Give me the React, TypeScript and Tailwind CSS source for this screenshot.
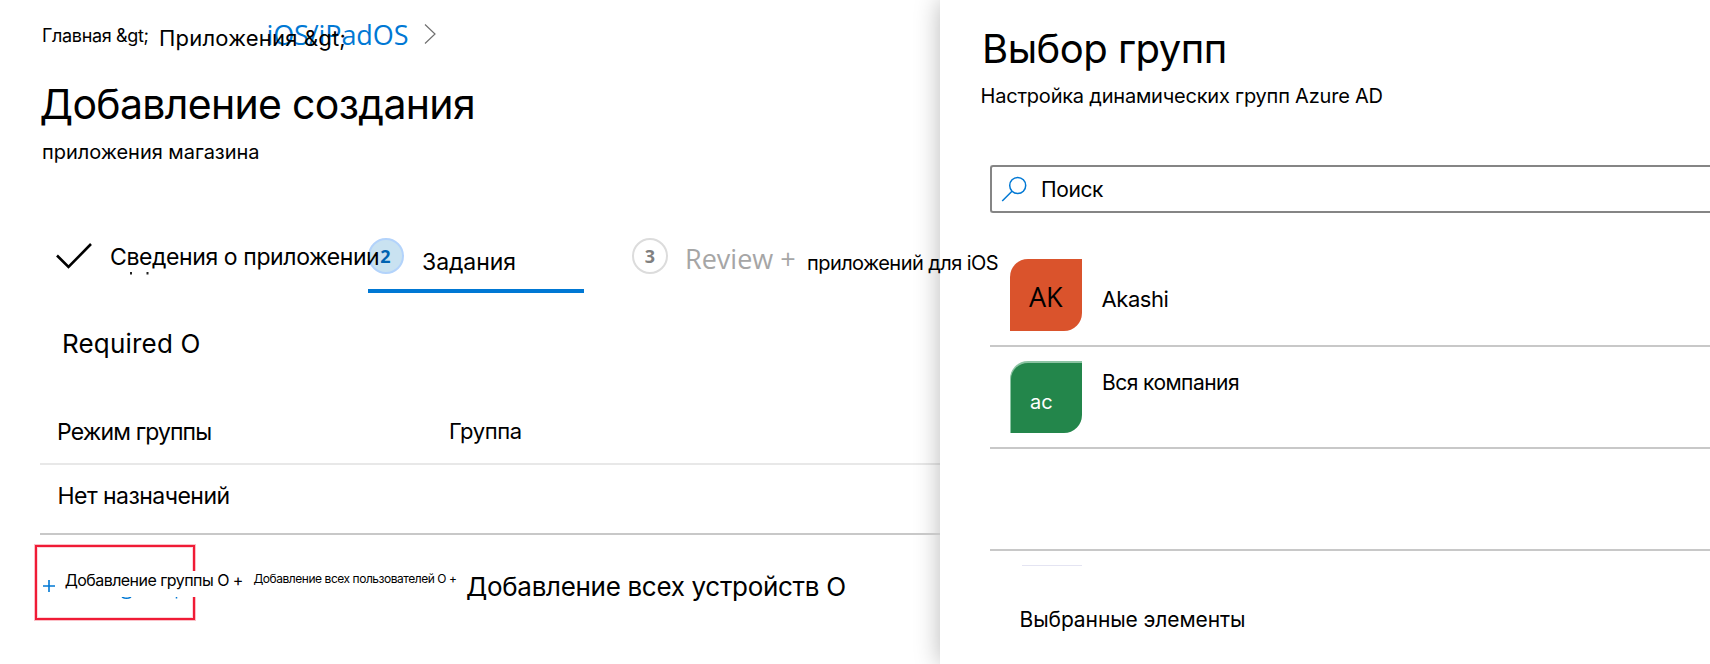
import type { ReactNode } from "react";

function Text({ className, children }: { className: string; children: ReactNode }) {
  return <span className={`block shrink-0 whitespace-nowrap ${className}`}>{children}</span>;
}

function Breadcrumb() {
  return (
    <nav className="flex h-[74px] items-start pl-[42px]">
      <Text className="mt-[15.6px] w-[117px] text-[18px] leading-[40px] tracking-[-0.019em]">Главная &amp;gt;</Text>
      <Text className="relative z-10 mt-[18px] w-[107.5px] text-[22px] leading-[40px] tracking-[0.009em]">Приложения &amp;gt;</Text>
      <Text className="mt-[15px] w-[157.5px] font-['Open_Sans',sans-serif] text-[27px] leading-[40px] tracking-[-0.004em] text-[#0078d4]">iOS/iPadOS</Text>
      <svg className="mt-[23px] h-[22px] w-[13px]" viewBox="0 0 13 22" fill="none" stroke="#707070" strokeWidth="1.2">
        <path d="M1 1.5L11 11L1 20.5" />
      </svg>
    </nav>
  );
}

function Steps() {
  return (
    <div className="flex h-[87px] items-start pl-[55px]">
      <div className="relative h-[60px] w-[55px] shrink-0">
        <svg className="mt-[4px] h-[32px] w-[54px]" viewBox="0 0 54 32" fill="none" stroke="#000" strokeWidth="2.6">
          <path d="M2 18.5L13.5 30L36 7" />
        </svg>
        <svg className="absolute top-[39px] left-[74px] h-[3px] w-[22px]" viewBox="0 0 22 3" fill="#222">
          <rect x="1" y="0" width="2" height="2.5" />
          <rect x="17.5" y="0" width="2" height="2.5" />
        </svg>
      </div>
      <Text className="relative z-10 mt-[3.6px] w-[258px] text-[23px] leading-[40px] tracking-[-0.0175em]">Сведения о приложении</Text>
      <div className="flex h-[60px] w-[216px] shrink-0 items-start border-b-4 border-[#0078d4]">
        <span className="mt-[5px] flex size-[36px] items-center justify-center rounded-full border-2 border-[#b3d3fb] bg-[#c9e2f1] pr-px font-['Open_Sans',sans-serif] text-[18px] leading-none font-bold text-[#0063b1]">2</span>
        <Text className="mt-[9.2px] ml-[18px] text-[23px] leading-[40px] tracking-[-0.003em]">Задания</Text>
      </div>
      <span className="mt-[5px] ml-[48px] flex size-[36px] shrink-0 items-center justify-center rounded-full border-2 border-[#dcdcdc] font-['Open_Sans',sans-serif] text-[18px] leading-none font-bold text-[#808080]">3</span>
      <Text className="mt-[6px] ml-[17px] w-[122px] font-['Open_Sans',sans-serif] text-[27px] leading-[40px] text-[#a6a6a6]">Review +</Text>
      <Text className="mt-[9.7px] text-[20px] leading-[40px] tracking-[-0.028em]">приложений для iOS</Text>
    </div>
  );
}

function Assignments() {
  return (
    <section>
      <Text className="mt-[3.5px] h-[76.5px] pl-[62px] text-[26px] leading-[40px] tracking-[0.007em]">Required O</Text>
      <div className="ml-[40px]">
        <div className="flex h-[65px] items-start border-b-2 border-black/9 pt-[11.6px] pl-[17px]">
          <Text className="w-[392px] text-[23px] leading-[40px] tracking-[-0.038em]">Режим группы</Text>
          <Text className="-mt-px text-[22px] leading-[40px] tracking-[-0.018em]">Группа</Text>
        </div>
        <div className="h-[70px] border-b-2 border-[#c8c8c8] pt-[10.6px] pl-[17.5px]">
          <Text className="text-[23px] leading-[40px] tracking-[-0.0235em]">Нет назначений</Text>
        </div>
      </div>
    </section>
  );
}

function Actions() {
  return (
    <div className="flex h-[129px] items-start pl-[35px]">
      <div className="relative mt-[10px] flex h-[75px] w-[160px] shrink-0 items-start border-2 border-[#f01b36] shadow-[0_0_0_1px_rgba(240,27,54,0.28),inset_0_0_0_1px_rgba(240,27,54,0.18)]">
        <svg className="mt-[32px] ml-[5px] h-[14px] w-[14px] shrink-0" viewBox="0 0 14 14" stroke="#0078d4" strokeWidth="1.6">
          <path d="M1 7H13M7 1V13" />
        </svg>
        <span className="absolute top-[24px] -right-[4px] h-[26px] w-[8px] bg-white" />
        <Text className="relative mt-[13.2px] ml-[8.7px] text-[16px] leading-[40px] tracking-[-0.034em]">Добавление группы O +</Text>
        <svg className="absolute top-[50px] left-[83px] h-[4px] w-[60px]" viewBox="0 0 60 4" fill="none" stroke="#0078d4" strokeWidth="1.5">
          <path d="M2 0Q6.5 2.6 11 0M56.5 0V1.5" />
        </svg>
      </div>
      <Text className="mt-[23.6px] ml-[58.5px] w-[212.5px] text-[12px] leading-[40px] tracking-[-0.0383em]">Добавление всех пользователей O +</Text>
      <Text className="mt-[31.5px] text-[26px] leading-[40px] tracking-[-0.012em]">Добавление всех устройств O</Text>
    </div>
  );
}

function GroupPanel() {
  return (
    <aside className="flex h-full min-w-0 flex-1 flex-col bg-white shadow-[0_0_24px_rgba(0,0,0,0.28)]">
      <Text className="mt-[18.5px] h-[57.2px] pl-[42px] text-[40px] leading-[60px] tracking-[-0.0128em]">Выбор групп</Text>
      <Text className="h-[89.3px] pl-[40.5px] text-[20px] leading-[40px] tracking-[-0.0105em]">Настройка динамических групп Azure AD</Text>
      <div className="ml-[50px] flex h-[48px] shrink-0 items-start rounded-l-[3px] border-2 border-r-0 border-[#858585]">
        <svg className="mt-[9px] ml-[9px] h-[28px] w-[28px]" viewBox="0 0 28 28" fill="none" stroke="#0078d4" strokeWidth="1.5">
          <circle cx="16.7" cy="9.5" r="8" />
          <path d="M11 15.2L1.2 25" />
        </svg>
        <Text className="mt-[3.4px] ml-[12px] text-[21px] leading-[40px] tracking-[-0.019em]">Поиск</Text>
      </div>
      <ul className="ml-[50px]">
        <li className="flex h-[134px] items-start border-b-2 border-[#c8c8c8] pt-[46px] pl-[20px]">
          <span className="h-[72px] w-[72px] rounded-tl-[18px] rounded-br-[18px] bg-[#da532c] pt-[18.5px] pl-[19px] font-['Open_Sans',sans-serif] text-[27px] leading-[40px]">AK</span>
          <Text className="mt-[20px] ml-[19.5px] text-[22px] leading-[40px] tracking-[-0.0194em]">Akashi</Text>
        </li>
        <li className="flex h-[102px] items-start border-b-2 border-[#c8c8c8] pt-[14px] pl-[20px]">
          <span className="h-[72px] w-[72px] rounded-tl-[18px] rounded-br-[18px] border-t-2 border-l border-[#8cc4a3] bg-[#23864b] pt-[18.7px] pl-[19px] text-[20px] leading-[40px] text-white">ac</span>
          <Text className="mt-[2.4px] ml-[20px] text-[21px] leading-[40px] tracking-[-0.0261em]">Вся компания</Text>
        </li>
        <li className="h-[102px] border-b-2 border-[#c8c8c8]" />
      </ul>
      <div className="mt-[14px] ml-[82px] h-px w-[60px] bg-[#e4e4f2]" />
      <Text className="mt-[34.4px] pl-[79.5px] text-[21px] leading-[40px] tracking-[-0.0041em]">Выбранные элементы</Text>
    </aside>
  );
}

export default function App() {
  return (
    <div className="flex h-[664px] w-full overflow-hidden bg-white font-['Inter',sans-serif] text-black">
      <main className="relative z-10 w-[940px] shrink-0">
        <Breadcrumb />
        <Text className="h-[57px] pl-[39.5px] text-[41px] leading-[60px] tracking-[-0.0165em]">Добавление создания</Text>
        <Text className="h-[102px] pt-px pl-[42px] text-[20px] leading-[40px] tracking-[-0.0013em]">приложения магазина</Text>
        <Steps />
        <Assignments />
        <Actions />
      </main>
      <GroupPanel />
    </div>
  );
}
